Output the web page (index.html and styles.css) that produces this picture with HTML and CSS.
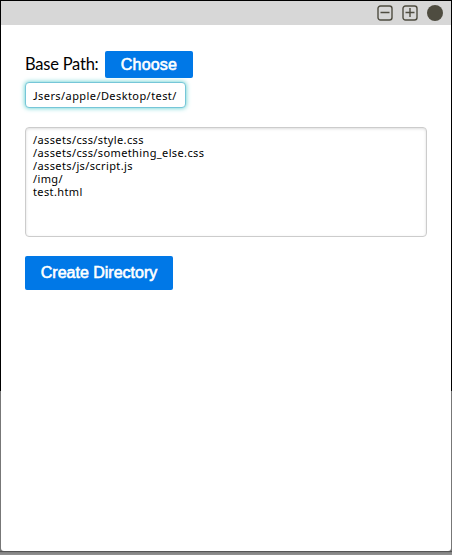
FILE: index.html
```html
<!DOCTYPE html>
<html lang="en">
<head>
<meta charset="utf-8">
<title>Create Directory</title>
<link rel="stylesheet" href="styles.css">
</head>
<body>
<div class="window">
  <header class="titlebar">
    <svg class="icon" viewBox="0 0 16 16"><rect x="1" y="1" width="14" height="14" rx="2.5"/><path d="M3.5 7.5h9"/></svg>
    <svg class="icon" viewBox="0 0 16 16"><rect x="1" y="1" width="14" height="14" rx="2.5"/><path d="M3.5 7.5h9M8 3v9"/></svg>
    <span class="dot"></span>
  </header>
  <main class="content">
    <div class="base-row">
      <span class="label">Base Path:</span>
      <button class="button choose">Choose</button>
    </div>
    <div class="field path" role="textbox" aria-label="Base Path" contenteditable="true" spellcheck="false"><span class="initial">J</span>sers/apple/Desktop/test/</div>
    <textarea class="field files" spellcheck="false">/assets/css/style.css
/assets/css/something_else.css
/assets/js/script.js
/img/
test.html</textarea>
    <button class="button create">Create Directory</button>
  </main>
</div>
</body>
</html>
```
FILE: styles.css
```css
* { box-sizing: border-box; }
body {
  margin: 0;
  height: 555px;
  padding: 1px 1px 4px;
  overflow: hidden;
  background: linear-gradient(#000 0 391px, #777 391px 551px, #555 551px 552px, #808080 552px, #929292 555px);
}
.window {
  height: 550px;
  background: #fff;
  border-radius: 0 0 3px 3px;
  overflow: hidden;
}
.titlebar {
  display: flex;
  align-items: center;
  justify-content: flex-end;
  height: 24px;
  gap: 9px;
  padding-right: 8px;
  background: #d7d7d7;
}
.icon {
  width: 16px;
  height: 16px;
  fill: none;
  stroke: #4e4c40;
  stroke-width: 1.4;
}
.dot {
  width: 16px;
  height: 16px;
  border-radius: 50%;
  background: #4e4c40;
}
.content {
  display: flex;
  flex-direction: column;
  align-items: flex-start;
  padding: 26px 24px 0;
}
.base-row { display: flex; height: 27px; }
.label {
  width: 80px;
  font: 16.5px/26px Lato, sans-serif;
  letter-spacing: -0.23px;
  color: #000;
  white-space: nowrap;
}
.button {
  border: 0;
  padding: 0;
  border-radius: 2px;
  background: #0078e7;
  color: #fff;
  font: 16px "Liberation Sans", sans-serif;
  -webkit-text-stroke: 0.6px #fff;
  white-space: nowrap;
}
.choose { width: 88px; height: 27px; letter-spacing: 0.2px; }
.field {
  display: block;
  margin: 0;
  outline: 0;
  border: 1px solid #ccc;
  border-radius: 4px;
  background: #fff;
  color: #000;
  font: 11px/13px "Noto Sans", sans-serif;
  letter-spacing: 0.38px;
  resize: none;
}
.path {
  width: 161px;
  height: 26px;
  margin-top: 4px;
  padding: 6px 7px 0;
  letter-spacing: 0.42px;
  white-space: nowrap;
  border-color: #76c6d8;
  box-shadow: 0 0 5px #51cbcb;
}
.initial { font-family: Lato, sans-serif; }
.files {
  width: 402px;
  height: 110px;
  margin-top: 19px;
  padding: 5px 7px;
  box-shadow: inset 0 1px 3px #ddd;
}
.create {
  width: 148px;
  height: 34px;
  margin-top: 19px;
}
```
